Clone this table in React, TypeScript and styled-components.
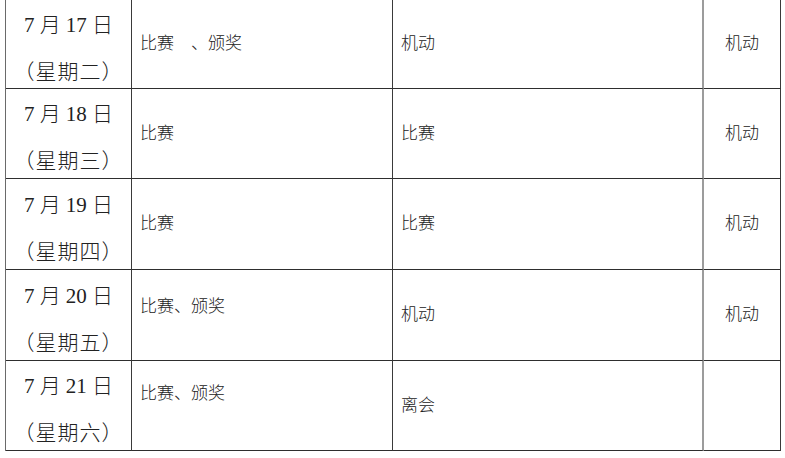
import React from 'react'
import styled, { createGlobalStyle } from 'styled-components'

const GlobalStyle = createGlobalStyle`
  html, body {
    margin: 0;
    padding: 0;
    background: #ffffff;
  }
  body {
    font-family: "Liberation Serif", "Noto Sans CJK SC", serif;
    color: #222222;
  }
`

const Page = styled.div`
  width: 785px;
  height: 458px;
  overflow: hidden;
  padding-left: 5px;
  box-sizing: border-box;
`

const Table = styled.div`
  display: grid;
  grid-template-columns: 126px 261px 311px 77px;
  grid-template-rows: 89px 90px 91px 91px 90px;
  border-left: 1px solid #6a6a6a;
  width: 775px;
`

const Cell = styled.div<{ $line: string; $center?: boolean; $lift?: number }>`
  box-sizing: border-box;
  display: flex;
  align-items: center;
  justify-content: ${(p) => (p.$center ? 'center' : 'flex-start')};
  padding-left: ${(p) => (p.$center ? '0' : '8px')};
  padding-bottom: ${(p) => p.$lift ?? 0}px;
  border-bottom: 1.5px solid #2e2e2e;
  border-right: ${(p) => p.$line};
  font-size: 17px;
  font-weight: 300;
  line-height: 24px;
  white-space: pre;
`

const DateCell = styled.div`
  box-sizing: border-box;
  display: flex;
  flex-direction: column;
  align-items: center;
  justify-content: center;
  gap: 23px;
  padding-top: 8px;
  border-bottom: 1.5px solid #2e2e2e;
  border-right: 1.5px solid #3a3a3a;
  font-size: 21px;
  font-weight: 300;
  line-height: 24px;
`

const Line = styled.span<{ $spread?: boolean }>`
  white-space: pre;
  letter-spacing: ${(p) => (p.$spread ? '1px' : '0')};
`

interface Day {
  date: string
  week: string
  morning: string
  afternoon: string
  evening: string
  lift?: number
}

const days: Day[] = [
  { date: '17', week: '（星期二）', morning: '比赛\u3000、颁奖', afternoon: '机动', evening: '机动' },
  { date: '18', week: '（星期三）', morning: '比赛', afternoon: '比赛', evening: '机动' },
  { date: '19', week: '（星期四）', morning: '比赛', afternoon: '比赛', evening: '机动' },
  { date: '20', week: '（星期五）', morning: '比赛、颁奖', afternoon: '机动', evening: '机动', lift: 16 },
  { date: '21', week: '（星期六）', morning: '比赛、颁奖', afternoon: '离会', evening: '', lift: 24 },
]

const darkLine = '1.5px solid #3a3a3a'
const grayLine = '2px solid #9c9c9c'

const App = () => {
  return (
    <React.Fragment>
      <GlobalStyle />
      <Page>
        <Table>
          {days.map((d) => (
            <React.Fragment key={d.date}>
              <DateCell>
                <Line>{`7 月 ${d.date} 日`}</Line>
                <Line $spread>{d.week}</Line>
              </DateCell>
              <Cell $line={darkLine} $lift={d.lift}>
                {d.morning}
              </Cell>
              <Cell $line={grayLine}>{d.afternoon}</Cell>
              <Cell $line={darkLine} $center>
                {d.evening}
              </Cell>
            </React.Fragment>
          ))}
        </Table>
      </Page>
    </React.Fragment>
  )
}

export default App
